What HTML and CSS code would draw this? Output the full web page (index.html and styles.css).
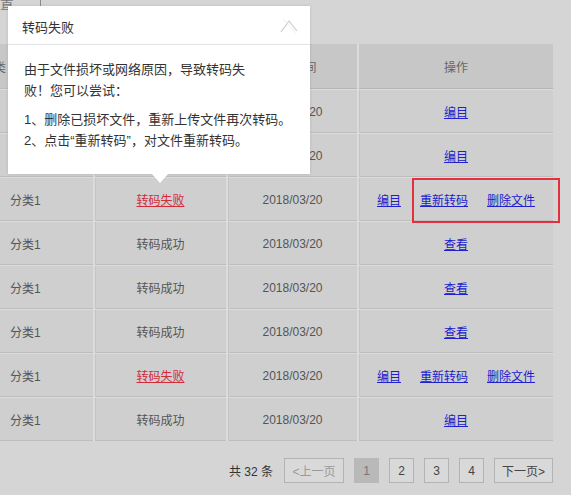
FILE: index.html
```html
<!DOCTYPE html>
<html lang="zh-CN">
<head>
<meta charset="utf-8">
<title>转码失败</title>
<link rel="stylesheet" href="styles.css">
</head>
<body>
<div class="page">
  <div class="topbar"><span class="topbtn">设置</span></div>

  <div class="table">
    <div class="row head">
      <div class="cell c1 headfirst">分类</div>
      <div class="cell">状态</div>
      <div class="cell">上传时间</div>
      <div class="cell">操作</div>
    </div>
    <div class="row">
      <div class="cell c1">分类1</div>
      <div class="cell">转码成功</div>
      <div class="cell">2018/03/20</div>
      <div class="cell ops"><a href="#">编目</a></div>
    </div>
    <div class="row">
      <div class="cell c1">分类1</div>
      <div class="cell">转码成功</div>
      <div class="cell">2018/03/20</div>
      <div class="cell ops"><a href="#">编目</a></div>
    </div>
    <div class="row">
      <div class="cell c1">分类1</div>
      <div class="cell"><a class="fail" href="#">转码失败</a></div>
      <div class="cell">2018/03/20</div>
      <div class="cell ops"><a href="#">编目</a><a href="#">重新转码</a><a href="#">删除文件</a></div>
    </div>
    <div class="row">
      <div class="cell c1">分类1</div>
      <div class="cell">转码成功</div>
      <div class="cell">2018/03/20</div>
      <div class="cell ops"><a href="#">查看</a></div>
    </div>
    <div class="row">
      <div class="cell c1">分类1</div>
      <div class="cell">转码成功</div>
      <div class="cell">2018/03/20</div>
      <div class="cell ops"><a href="#">查看</a></div>
    </div>
    <div class="row">
      <div class="cell c1">分类1</div>
      <div class="cell">转码成功</div>
      <div class="cell">2018/03/20</div>
      <div class="cell ops"><a href="#">查看</a></div>
    </div>
    <div class="row">
      <div class="cell c1">分类1</div>
      <div class="cell"><a class="fail" href="#">转码失败</a></div>
      <div class="cell">2018/03/20</div>
      <div class="cell ops"><a href="#">编目</a><a href="#">重新转码</a><a href="#">删除文件</a></div>
    </div>
    <div class="row">
      <div class="cell c1">分类1</div>
      <div class="cell">转码成功</div>
      <div class="cell">2018/03/20</div>
      <div class="cell ops"><a href="#">编目</a></div>
    </div>
  </div>

  <div class="pager">
    <span class="total">共 32 条</span>
    <span class="pbtn wide disabled">&lt;上一页</span>
    <span class="pbtn active">1</span>
    <span class="pbtn">2</span>
    <span class="pbtn">3</span>
    <span class="pbtn">4</span>
    <span class="pbtn wide">下一页&gt;</span>
  </div>

  <div class="highlight"></div>

  <div class="popup">
    <div class="popup-title">
      <span>转码失败</span>
      <svg class="close" width="18" height="16" viewBox="0 0 18 16"><path d="M1 14 L9 3 L17 13" stroke="#cbcbcb" stroke-width="1.2" fill="none" stroke-linejoin="round"/><path d="M3 1 L16 15" stroke="#efefef" stroke-width="1" fill="none"/></svg>
    </div>
    <div class="popup-body">
      <p>由于文件损坏或网络原因，导致转码失<br>败！您可以尝试：</p>
      <p>1、删除已损坏文件，重新上传文件再次转码。<br>2、点击“重新转码”，对文件重新转码。</p>
    </div>
  </div>
</div>
</body>
</html>
```

FILE: styles.css
```css
html, body {
  margin: 0;
  padding: 0;
}
body {
  background: #d5d5d5;
  font-family: "Liberation Sans", "Noto Sans CJK SC", sans-serif;
  font-size: 12px;
  color: #555;
  width: 571px;
  height: 495px;
  overflow: hidden;
}
.page {
  position: relative;
  width: 571px;
  height: 495px;
}
.topbar {
  height: 13px;
  overflow: hidden;
}
.topbtn {
  display: block;
  width: 41px;
  height: 13px;
  box-sizing: border-box;
  border-right: 1px solid #8a8a8a;
  font-size: 14px;
  line-height: 6px;
  text-indent: -14px;
  color: #777;
  overflow: hidden;
}
.table {
  margin-top: 31px;
  width: 553px;
  display: flex;
  flex-direction: column;
  gap: 1px;
  background: #dcdcdc;
}
.row {
  display: grid;
  grid-template-columns: 93px 131px 129px 194px;
  column-gap: 2px;
  height: 43px;
}
.row.head {
  height: 45px;
}
.cell {
  background: #cfcfcf;
  display: flex;
  align-items: center;
  justify-content: center;
  box-shadow: inset 1px 0 0 #c4c4c4, inset 0 -1px 0 #bdbdbd;
  white-space: nowrap;
  overflow: hidden;
}
.head .cell {
  background: #c7c7c7;
  color: #666;
  box-shadow: inset 0 -1px 0 #b5b5b5;
}
.cell.c1 {
  justify-content: flex-start;
  padding-left: 10px;
  box-shadow: inset 0 -1px 0 #bdbdbd;
}
.head .cell.headfirst {
  padding-left: 0;
  text-indent: -18px;
}
.ops {
  gap: 19px;
}
a {
  color: #2020cc;
  text-decoration: underline;
}
a.fail {
  color: #d42a3a;
}
.pager {
  width: 553px;
  margin-top: 17px;
  display: flex;
  justify-content: flex-end;
  align-items: center;
  gap: 10px;
}
.total {
  color: #333;
  margin-right: 1px;
}
.pbtn {
  box-sizing: border-box;
  width: 25px;
  height: 25px;
  border: 1px solid #b3b3b3;
  background: #d9d9d9;
  color: #444;
  display: flex;
  align-items: center;
  justify-content: center;
}
.pbtn.wide {
  width: 59px;
}
.pbtn.disabled {
  width: 60px;
  color: #9a9a9a;
}
.pbtn.active {
  background: #b9b9b9;
  border-color: #b9b9b9;
  color: #777;
}
.highlight {
  position: absolute;
  left: 412px;
  top: 178px;
  width: 148px;
  height: 45px;
  box-sizing: border-box;
  border: 2px solid #e3303f;
}
.popup {
  position: absolute;
  left: 8px;
  top: 6px;
  width: 302px;
  height: 168px;
  background: #fff;
  color: #333;
  font-size: 13px;
  box-shadow: 0 0 3px rgba(0, 0, 0, 0.12);
}
.popup::after {
  content: "";
  position: absolute;
  left: 144px;
  top: 100%;
  border-left: 8px solid transparent;
  border-right: 8px solid transparent;
  border-top: 9px solid #fff;
}
.popup-title {
  height: 39px;
  box-sizing: border-box;
  padding: 2px 14px 0 14px;
  border-bottom: 1px solid #e3e3e3;
  display: flex;
  align-items: center;
  justify-content: space-between;
}
.close {
  margin-right: -2px;
}
.popup-body {
  padding: 14px 10px 0 16px;
  line-height: 21px;
  white-space: nowrap;
}
.popup-body p {
  margin: 0 0 8px 0;
}
```
